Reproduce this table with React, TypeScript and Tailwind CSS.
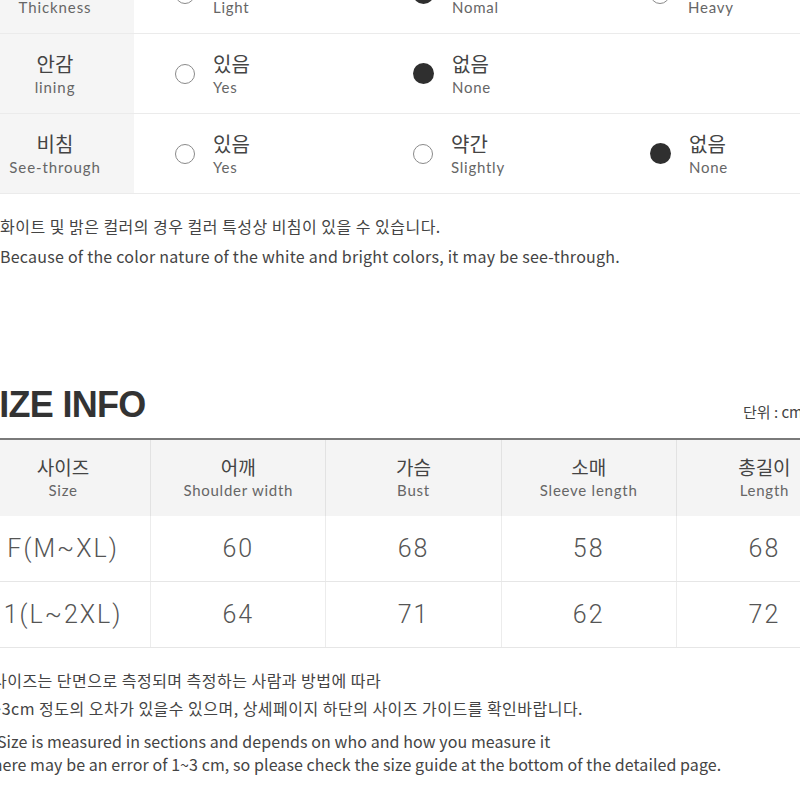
const kr = "font-['Noto_Sans_CJK_KR',sans-serif]";
const lat = "font-['Lato','Noto_Sans_CJK_KR',sans-serif]";

type Opt = { ko: string; en: string; on?: boolean };

const fabric: { ko: string; en: string; opts: Opt[] }[] = [
  {
    ko: "두께",
    en: "Thickness",
    opts: [
      { ko: "얇음", en: "Light" },
      { ko: "보통", en: "Nomal", on: true },
      { ko: "두꺼움", en: "Heavy" },
    ],
  },
  {
    ko: "안감",
    en: "lining",
    opts: [
      { ko: "있음", en: "Yes" },
      { ko: "없음", en: "None", on: true },
    ],
  },
  {
    ko: "비침",
    en: "See-through",
    opts: [
      { ko: "있음", en: "Yes" },
      { ko: "약간", en: "Slightly" },
      { ko: "없음", en: "None", on: true },
    ],
  },
];

const heads = [
  { ko: "사이즈", en: "Size" },
  { ko: "어깨", en: "Shoulder width" },
  { ko: "가슴", en: "Bust" },
  { ko: "소매", en: "Sleeve length" },
  { ko: "총길이", en: "Length" },
];

const rows = [
  ["F(M~XL)", "60", "68", "58", "68"],
  ["1(L~2XL)", "64", "71", "62", "72"],
];

function Radio({ on }: { on?: boolean }) {
  return on ? (
    <span className="block h-[21px] w-[21px] shrink-0 rounded-full bg-[#2f2f2f]" />
  ) : (
    <span className="block h-[20px] w-[20px] shrink-0 rounded-full border-[1.5px] border-[#8a8a8a] bg-white" />
  );
}

export default function App() {
  return (
    <div className="h-[800px] w-[800px] overflow-hidden bg-white text-[#444]">
      <div className="-ml-6 w-[876px]">
        {/* fabric info */}
        <div className="-mt-[46px]">
          {fabric.map((r) => (
            <div
              key={r.en}
              className="grid h-[80px] grid-cols-[158px_238px_237px_243px] border-b border-[#ebebeb]"
            >
              <div className="flex flex-col items-center justify-center bg-[#f5f5f5]">
                <span className={`${kr} text-[20px] leading-[26px] text-[#444]`}>{r.ko}</span>
                <span className={`${lat} text-[15px] leading-[20px] tracking-[0.06em] text-[#666]`}>
                  {r.en}
                </span>
              </div>
              {r.opts.map((o) => (
                <div key={o.en} className="flex items-center gap-[18px] pl-[41px]">
                  <Radio on={o.on} />
                  <div className="flex flex-col">
                    <span className={`${kr} text-[20px] leading-[26px] text-[#444]`}>{o.ko}</span>
                    <span className={`${lat} text-[15px] leading-[20px] tracking-[0.05em] text-[#666]`}>
                      {o.en}
                    </span>
                  </div>
                </div>
              ))}
            </div>
          ))}
        </div>

        <div className={`${kr} mt-[17px] pl-6 text-[16px] leading-[30px] tracking-[0.015em] text-[#444]`}>
          <p className="tracking-[0.03em]">화이트 및 밝은 컬러의 경우 컬러 특성상 비침이 있을 수 있습니다.</p>
          <p>Because of the color nature of the white and bright colors, it may be see-through.</p>
        </div>

        {/* size info */}
        <div className="mt-[114px] flex items-end justify-between pr-[49px]">
          <h2 className="font-['Liberation_Sans',sans-serif] text-[36px] font-bold leading-[40px] tracking-[-0.02em] text-[#333]">
            SIZE INFO
          </h2>
          <span className={`${kr} mb-[2px] text-[15px] leading-[22px] text-[#444]`}>단위 : cm</span>
        </div>

        <div className="mt-[13px] border-t-2 border-[#7a7a7a]">
          <div className="grid h-[76px] grid-cols-5 bg-[#f4f4f4]">
            {heads.map((h, i) => (
              <div
                key={h.en}
                className={`flex flex-col items-center justify-center ${i < 4 ? "border-r border-[#e2e2e2]" : ""}`}
              >
                <span className={`${kr} text-[19px] leading-[24px] text-[#444]`}>{h.ko}</span>
                <span className={`${lat} text-[15px] leading-[22px] tracking-[0.05em] text-[#666]`}>
                  {h.en}
                </span>
              </div>
            ))}
          </div>
          {rows.map((r) => (
            <div key={r[0]} className="grid h-[66px] grid-cols-5 border-b border-[#e6e6e6]">
              {r.map((c, i) => (
                <div
                  key={i}
                  className={`flex items-center justify-center font-['Roboto',sans-serif] text-[25px] font-light tracking-[0.08em] text-[#555] ${
                    i < 4 ? "border-r border-[#ececec]" : ""
                  }`}
                >
                  {c}
                </div>
              ))}
            </div>
          ))}
        </div>

        <div className={`${kr} mt-[18px] text-[#444]`}>
          <div className="text-[16px] leading-[28px] tracking-[0.03em]">
            <p className="pl-[16px]">사이즈는 단면으로 측정되며 측정하는 사람과 방법에 따라</p>
            <p className="pl-[7px]">1~3cm 정도의 오차가 있을수 있으며, 상세페이지 하단의 사이즈 가이드를 확인바랍니다.</p>
          </div>
          <div className="mt-[8px] text-[16px] leading-[23px] tracking-[0.005em]">
            <p className="pl-[21px]">Size is measured in sections and depends on who and how you measure it</p>
            <p className="pl-[7px]">There may be an error of 1~3 cm, so please check the size guide at the bottom of the detailed page.</p>
          </div>
        </div>
      </div>
    </div>
  );
}
